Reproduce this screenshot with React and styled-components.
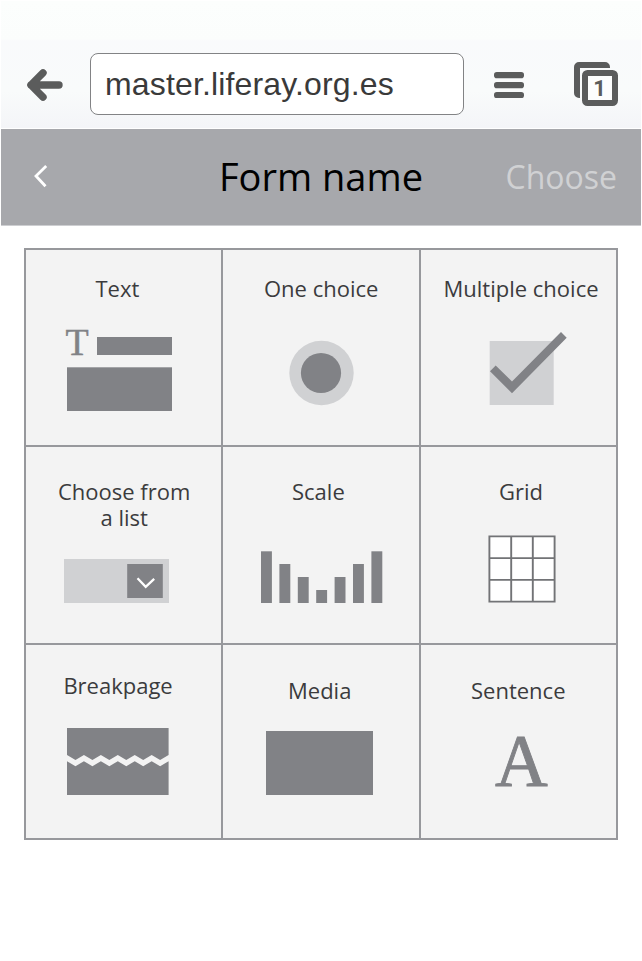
import React from "react";
import styled, { createGlobalStyle } from "styled-components";

const GlobalStyle = createGlobalStyle`
  body {
    margin: 0;
    background: #fff;
  }
`;

const Screen = styled.div`
  box-sizing: border-box;
  width: 642px;
  height: 961px;
  padding: 1px;
  overflow: hidden;
  background: #fff;
  font-family: "Open Sans", sans-serif;
`;

const BrowserBar = styled.div`
  box-sizing: border-box;
  display: flex;
  align-items: flex-start;
  height: 127px;
  padding: 52px 23px 0 25px;
  background: linear-gradient(#fcfefd 0, #fbfdfc 38px, #f9fafc 40px, #f9fbfb 90px, #f4f5f8 126px);
`;

const BackIcon = styled.svg`
  width: 38px;
  height: 34px;
  margin-top: 15px;
`;

const Address = styled.div`
  box-sizing: border-box;
  width: 374px;
  height: 62px;
  margin-left: 26px;
  padding-left: 14px;
  border: 1px solid #828385;
  border-radius: 8px;
  background: #fff;
  color: #3a3a3a;
  font: 32px/61px "Liberation Sans", sans-serif;
  letter-spacing: 0.15px;
  white-space: nowrap;
`;

const MenuIcon = styled.svg`
  width: 30px;
  height: 26px;
  margin: 19px 0 0 30px;
`;

const TabsIcon = styled.svg`
  width: 44px;
  height: 44px;
  margin: 9px 0 0 50px;
`;

const TitleBar = styled.header`
  box-sizing: border-box;
  display: grid;
  grid-template-columns: 1fr auto 1fr;
  align-items: center;
  height: 97px;
  margin-top: 1px;
  padding: 0 24px 2px 32px;
  border-bottom: 1px solid #cdced1;
  background: #a7a8ac;
`;

const BackChevron = styled.svg`
  width: 16px;
  height: 24px;
`;

const Title = styled.h1`
  margin: 0 8px 0 0;
  color: #000;
  font-size: 38px;
  font-weight: 400;
  line-height: 52px;
`;

const Choose = styled.span`
  justify-self: end;
  padding-top: 2px;
  color: #d0d1d3;
  font-size: 32px;
  font-weight: 400;
  line-height: 44px;
`;

const FieldGrid = styled.main`
  box-sizing: border-box;
  display: grid;
  grid-template-columns: 195px 196px 195px;
  grid-template-rows: 195px 196px 193px;
  gap: 2px;
  width: 594px;
  height: 592px;
  margin: 22px 0 0 23px;
  padding: 2px;
  background: #97989c;
`;

const Field = styled.section`
  display: flex;
  flex-direction: column;
  align-items: flex-start;
  background: #f3f3f3;
`;

const Label = styled.h2`
  margin: ${(p) => p.$top}px 0 0 ${(p) => p.$left}px;
  color: #3b3b3d;
  font-size: 22px;
  font-weight: 400;
  line-height: 26px;
  text-align: center;
  white-space: pre;
`;

const Drawing = styled.svg`
  display: block;
  flex: none;
  margin: ${(p) => p.$top}px 0 0 ${(p) => p.$left}px;
  overflow: visible;
  fill: #818286;
`;

const Letter = styled.text`
  font-family: "Liberation Serif", serif;
  font-size: ${(p) => p.$size}px;
  stroke: #818286;
  stroke-width: ${(p) => p.$stroke}px;
`;

const LIGHT = "#d0d1d3";

const zig = (high, low) =>
  Array.from({ length: 13 }, (_, i) => `${(i * 101.6) / 12},${i % 2 ? low : high}`);

const bars = [
  [0, 51.7], [18.4, 39], [36.8, 26], [55.2, 13], [73.6, 26], [92, 39], [110.4, 51.7],
];

const fields = [
  {
    label: "Text", top: 25, left: 69.5,
    art: (
      <Drawing width="106" height="82" $top={28} $left={40}>
        <Letter x="-0.5" y="26" $size={38} $stroke={0.4}>T</Letter>
        <rect x="31" y="8" width="75" height="18" />
        <rect x="1" y="38.3" width="105" height="43.7" />
      </Drawing>
    ),
  },
  {
    label: "One choice", top: 25, left: 41,
    art: (
      <Drawing width="65" height="64" $top={40} $left={66}>
        <circle cx="32.5" cy="32" r="32.2" fill={LIGHT} />
        <circle cx="32" cy="32" r="20.1" />
      </Drawing>
    ),
  },
  {
    label: "Multiple choice", top: 25, left: 22.5,
    art: (
      <Drawing width="78" height="74" $top={30} $left={68}>
        <rect x="0.7" y="10" width="64" height="64" fill={LIGHT} />
        <polygon points="1,40.2 6.7,34.6 23,50.4 72,1 77.7,6.7 23,62.2" />
      </Drawing>
    ),
  },
  {
    label: "Choose from\na list", top: 31, left: 32,
    art: (
      <Drawing width="105" height="44" $top={29} $left={38}>
        <rect width="105" height="44" fill={LIGHT} />
        <rect x="63.2" y="5" width="35.6" height="34" />
        <polyline points="73.5,19.3 81.7,27.8 90.2,19.8" fill="none" stroke="#fff" strokeWidth="2.3" />
      </Drawing>
    ),
  },
  {
    label: "Scale", top: 31, left: 69,
    art: (
      <Drawing width="122" height="52" $top={47} $left={37.5}>
        {bars.map(([x, h]) => (
          <rect key={x} x={x} y={52 - h} width="10.9" height={h} />
        ))}
      </Drawing>
    ),
  },
  {
    label: "Grid", top: 31, left: 78,
    art: (
      <Drawing width="68" height="68" $top={31} $left={67}>
        <path
          d="M1.4 1.4H66.6V66.6H1.4ZM23.2 1.4V66.6M44.8 1.4V66.6M1.4 23.1H66.6M1.4 44.9H66.6"
          fill="#fff"
          stroke="#727376"
          strokeWidth="1.9"
        />
      </Drawing>
    ),
  },
  {
    label: "Breakpage", top: 27, left: 37.4,
    art: (
      <Drawing width="102" height="67" $top={30} $left={41.3}>
        <polygon points={`0,0 ${zig(27, 32).join(" ")} 101.6,0`} />
        <polygon points={`0,67 ${zig(33.2, 38.2).join(" ")} 101.6,67`} />
      </Drawing>
    ),
  },
  {
    label: "Media", top: 32, left: 65,
    art: (
      <Drawing width="107" height="64" $top={28} $left={43}>
        <rect width="107" height="64" />
      </Drawing>
    ),
  },
  {
    label: "Sentence", top: 32, left: 50,
    art: (
      <Drawing width="54" height="50" $top={34} $left={74}>
        <Letter x="0" y="49.3" $size={73} $stroke={0.9}>A</Letter>
      </Drawing>
    ),
  },
];

export default function App() {
  return (
    <Screen>
      <GlobalStyle />
      <BrowserBar>
        <BackIcon viewBox="0 0 38 34" fill="none" stroke="#5b5c5c" strokeWidth="7.4" strokeLinecap="round" strokeLinejoin="round">
          <path d="M17 4.8 4.9 17 17 29.2M5 17H33" />
        </BackIcon>
        <Address>master.liferay.org.es</Address>
        <MenuIcon viewBox="0 0 30 26" fill="#5b5c5c">
          <rect width="30" height="6.2" rx="2.8" />
          <rect y="10" width="30" height="6.2" rx="2.8" />
          <rect y="20" width="30" height="6.2" rx="2.8" />
        </MenuIcon>
        <TabsIcon viewBox="0 0 44 44">
          <path d="M5 36A5 5 0 0 1 0 31V5A5 5 0 0 1 5 0H31A5 5 0 0 1 36 5V6H6V36Z" fill="#5b5c5c" />
          <rect x="11" y="11" width="30" height="30" rx="2.5" fill="#fcfdfd" stroke="#5b5c5c" strokeWidth="6" />
          <text x="25.5" y="34" textAnchor="middle" fill="#5b5c5c" fontFamily="Roboto, sans-serif" fontSize="22" fontWeight="700">1</text>
        </TabsIcon>
      </BrowserBar>
      <TitleBar>
        <BackChevron viewBox="0 0 16 24" fill="none" stroke="#fff" strokeWidth="2.8">
          <path d="M13.2 2 3 12 12.5 22.3" />
        </BackChevron>
        <Title>Form name</Title>
        <Choose>Choose</Choose>
      </TitleBar>
      <FieldGrid>
        {fields.map(({ label, top, left, art }) => (
          <Field key={label}>
            <Label $top={top} $left={left}>{label}</Label>
            {art}
          </Field>
        ))}
      </FieldGrid>
    </Screen>
  );
}
